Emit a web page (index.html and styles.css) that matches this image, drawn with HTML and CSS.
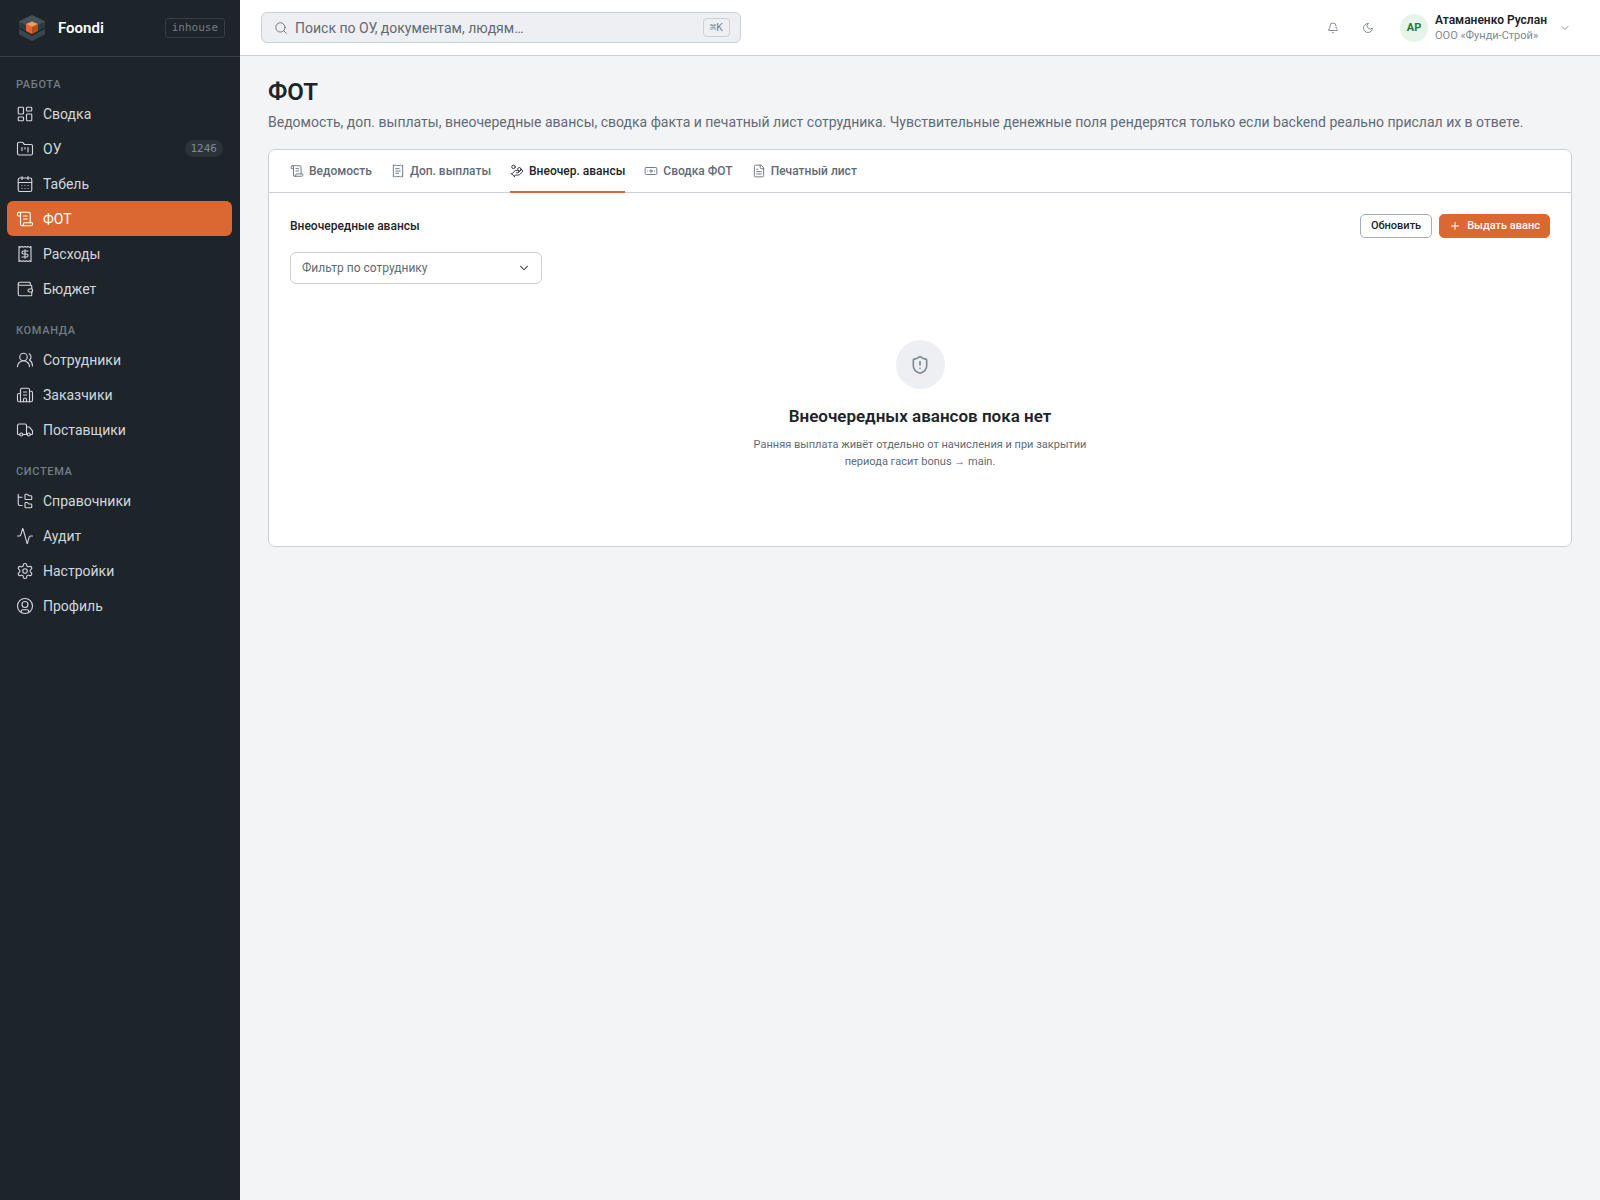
FILE: index.html
```html
<!DOCTYPE html>
<html lang="ru">
<head>
<meta charset="utf-8">
<meta name="viewport" content="width=device-width, initial-scale=1">
<title>ФОТ — Foondi</title>
<link rel="stylesheet" href="styles.css">
</head>
<body>
<div class="app">
  <aside class="sidebar">
    <div class="brand">
      <svg class="brand-logo" viewBox="0 0 36 36" aria-hidden="true">
        <path d="M18 5 31 11.5V23.500L18 31 5 23.500V11.500z" fill="#2f3b43"/>
        <path d="M18 5 31 11.500 18 18 5 11.500z" fill="#44515a"/>
        <path d="M5 18.500 18 25.500 31 18.500V24.500L18 31 5 24.500z" fill="#3a464e"/>
        <path d="M5 18 18 25 31 18" fill="none" stroke="#1d242a" stroke-width="1.200"/>
        <path d="M12 14 18 17V24L12 21z" fill="#e2662d"/>
        <path d="M24 14 18 17V24L24 21z" fill="#b84a1e"/>
        <path d="M18 11.500 24 14 18 17 12 14z" fill="#f79a5c"/>
      </svg>
      <span class="brand-name">Foondi</span>
      <span class="brand-tag">inhouse</span>
    </div>
    <nav class="nav">
      <section class="nav-group">
        <h2 class="nav-label">Работа</h2>
        <a class="nav-item" href="#"><svg class="icon" viewBox="0 0 24 24"><rect x="3" y="3" width="7" height="9" rx="1"/><rect x="14" y="3" width="7" height="5" rx="1"/><rect x="14" y="12" width="7" height="9" rx="1"/><rect x="3" y="16" width="7" height="5" rx="1"/></svg>Сводка</a>
        <a class="nav-item" href="#"><svg class="icon" viewBox="0 0 24 24"><path d="M4 20h16a2 2 0 0 0 2-2V8a2 2 0 0 0-2-2h-7.930a2 2 0 0 1-1.660-.9l-.82-1.200A2 2 0 0 0 7.930 3H4a2 2 0 0 0-2 2v13c0 1.100.9 2 2 2Z"/><path d="M8 10v4M12 10v2M16 10v6"/></svg>ОУ<span class="nav-count">1246</span></a>
        <a class="nav-item" href="#"><svg class="icon" viewBox="0 0 24 24"><path d="M8 2v4M16 2v4M3 10h18"/><rect x="3" y="4" width="18" height="18" rx="2"/><path d="M8 14h.01M12 14h.01M16 14h.01M8 18h.01M12 18h.01M16 18h.01"/></svg>Табель</a>
        <a class="nav-item is-active" href="#" aria-current="page"><svg class="icon" viewBox="0 0 24 24"><path d="M15 12h-5M15 8h-5M19 17V5a2 2 0 0 0-2-2H4"/><path d="M8 21h12a2 2 0 0 0 2-2v-1a1 1 0 0 0-1-1H11a1 1 0 0 0-1 1v1a2 2 0 1 1-4 0V5a2 2 0 1 0-4 0v2a1 1 0 0 0 1 1h3"/></svg>ФОТ</a>
        <a class="nav-item" href="#"><svg class="icon" viewBox="0 0 24 24"><path d="M4 2v20l2-1 2 1 2-1 2 1 2-1 2 1 2-1 2 1V2l-2 1-2-1-2 1-2-1-2 1-2-1-2 1Z"/><path d="M16 8h-6a2 2 0 1 0 0 4h4a2 2 0 1 1 0 4H8M12 17.500v-11"/></svg>Расходы</a>
        <a class="nav-item" href="#"><svg class="icon" viewBox="0 0 24 24"><path d="M19 7V4a1 1 0 0 0-1-1H5a2 2 0 0 0 0 4h15a1 1 0 0 1 1 1v4h-3a2 2 0 0 0 0 4h3a1 1 0 0 0 1-1v-2a1 1 0 0 0-1-1"/><path d="M3 5v14a2 2 0 0 0 2 2h15a1 1 0 0 0 1-1v-4"/></svg>Бюджет</a>
      </section>
      <section class="nav-group">
        <h2 class="nav-label">Команда</h2>
        <a class="nav-item" href="#"><svg class="icon" viewBox="0 0 24 24"><path d="M18 21a8 8 0 0 0-16 0"/><circle cx="10" cy="8" r="5"/><path d="M22 20c0-3.370-2-6.500-4-8a5 5 0 0 0-.45-8.300"/></svg>Сотрудники</a>
        <a class="nav-item" href="#"><svg class="icon" viewBox="0 0 24 24"><path d="M10 12h4M10 8h4M14 21v-3a2 2 0 0 0-4 0v3"/><path d="M6 10H4a2 2 0 0 0-2 2v7a2 2 0 0 0 2 2h16a2 2 0 0 0 2-2V9a2 2 0 0 0-2-2h-2"/><path d="M6 21V5a2 2 0 0 1 2-2h8a2 2 0 0 1 2 2v16"/></svg>Заказчики</a>
        <a class="nav-item" href="#"><svg class="icon" viewBox="0 0 24 24"><path d="M14 18V6a2 2 0 0 0-2-2H4a2 2 0 0 0-2 2v11a1 1 0 0 0 1 1h2M15 18H9M19 18h2a1 1 0 0 0 1-1v-3.650a1 1 0 0 0-.22-.624l-3.480-4.350A1 1 0 0 0 17.520 8H14"/><circle cx="17" cy="18" r="2"/><circle cx="7" cy="18" r="2"/></svg>Поставщики</a>
      </section>
      <section class="nav-group">
        <h2 class="nav-label">Система</h2>
        <a class="nav-item" href="#"><svg class="icon" viewBox="0 0 24 24"><path d="M20 10a1 1 0 0 0 1-1V6a1 1 0 0 0-1-1h-2.500a1 1 0 0 1-.8-.4l-.9-1.200A1 1 0 0 0 15 3h-2a1 1 0 0 0-1 1v5a1 1 0 0 0 1 1ZM20 21a1 1 0 0 0 1-1v-3a1 1 0 0 0-1-1h-2.900a1 1 0 0 1-.88-.55l-.42-.85a1 1 0 0 0-.92-.6H13a1 1 0 0 0-1 1v5a1 1 0 0 0 1 1ZM3 5a2 2 0 0 0 2 2h3M3 3v13a2 2 0 0 0 2 2h3"/></svg>Справочники</a>
        <a class="nav-item" href="#"><svg class="icon" viewBox="0 0 24 24"><path d="M22 12h-2.480a2 2 0 0 0-1.930 1.460l-2.350 8.360a.25.25 0 0 1-.48 0L9.240 2.180a.25.25 0 0 0-.48 0l-2.350 8.360A2 2 0 0 1 4.490 12H2"/></svg>Аудит</a>
        <a class="nav-item" href="#"><svg class="icon" viewBox="0 0 24 24"><path d="M12.220 2h-.44a2 2 0 0 0-2 2v.18a2 2 0 0 1-1 1.730l-.43.25a2 2 0 0 1-2 0l-.15-.08a2 2 0 0 0-2.730.73l-.22.38a2 2 0 0 0 .73 2.730l.15.1a2 2 0 0 1 1 1.720v.51a2 2 0 0 1-1 1.740l-.15.09a2 2 0 0 0-.73 2.730l.22.38a2 2 0 0 0 2.730.73l.15-.08a2 2 0 0 1 2 0l.43.25a2 2 0 0 1 1 1.730V20a2 2 0 0 0 2 2h.44a2 2 0 0 0 2-2v-.18a2 2 0 0 1 1-1.730l.43-.25a2 2 0 0 1 2 0l.15.08a2 2 0 0 0 2.730-.73l.22-.39a2 2 0 0 0-.73-2.730l-.15-.08a2 2 0 0 1-1-1.740v-.5a2 2 0 0 1 1-1.740l.15-.09a2 2 0 0 0 .73-2.730l-.22-.38a2 2 0 0 0-2.730-.73l-.15.08a2 2 0 0 1-2 0l-.43-.25a2 2 0 0 1-1-1.730V4a2 2 0 0 0-2-2z"/><circle cx="12" cy="12" r="3"/></svg>Настройки</a>
        <a class="nav-item" href="#"><svg class="icon" viewBox="0 0 24 24"><circle cx="12" cy="12" r="10"/><circle cx="12" cy="10" r="4"/><path d="M7 20.660V19a2 2 0 0 1 2-2h6a2 2 0 0 1 2 2v1.660"/></svg>Профиль</a>
      </section>
    </nav>
  </aside>
  <div class="main">
    <header class="topbar">
      <label class="search">
        <svg class="icon icon-search" viewBox="0 0 24 24"><circle cx="11" cy="11" r="8"/><path d="m21 21-4.300-4.300"/></svg>
        <input class="search-input" type="search" placeholder="Поиск по ОУ, документам, людям…" aria-label="Поиск">
        <kbd class="search-key">⌘K</kbd>
      </label>
      <div class="topbar-actions">
        <button class="icon-button" type="button" aria-label="Уведомления"><svg class="icon" viewBox="0 0 24 24"><path d="M10.270 21a2 2 0 0 0 3.460 0M3.260 15.330A1 1 0 0 0 4 17h16a1 1 0 0 0 .74-1.670C19.410 13.960 18 12.500 18 8A6 6 0 0 0 6 8c0 4.500-1.410 5.960-2.740 7.330"/></svg></button>
        <button class="icon-button" type="button" aria-label="Тема"><svg class="icon" viewBox="0 0 24 24"><path d="M12 3a6 6 0 0 0 9 9 9 9 0 1 1-9-9Z"/></svg></button>
        <button class="user" type="button">
          <span class="avatar">АР</span>
          <span class="user-text"><span class="user-name">Атаманенко Руслан</span><span class="user-org">ООО «Фунди-Строй»</span></span>
          <svg class="icon icon-chevron" viewBox="0 0 24 24"><path d="m6 9 6 6 6-6"/></svg>
        </button>
      </div>
    </header>
    <main class="page">
      <h1 class="page-title">ФОТ</h1>
      <p class="page-lead">Ведомость, доп. выплаты, внеочередные авансы, сводка факта и печатный лист сотрудника. Чувствительные денежные поля рендерятся только если backend реально прислал их в ответе.</p>
      <section class="card">
        <div class="tabs" role="tablist">
          <button class="tab" type="button" role="tab"><svg class="icon" viewBox="0 0 24 24"><path d="M15 12h-5M15 8h-5M19 17V5a2 2 0 0 0-2-2H4"/><path d="M8 21h12a2 2 0 0 0 2-2v-1a1 1 0 0 0-1-1H11a1 1 0 0 0-1 1v1a2 2 0 1 1-4 0V5a2 2 0 1 0-4 0v2a1 1 0 0 0 1 1h3"/></svg>Ведомость</button>
          <button class="tab" type="button" role="tab"><svg class="icon" viewBox="0 0 24 24"><path d="M4 2v20l2-1 2 1 2-1 2 1 2-1 2 1 2-1 2 1V2l-2 1-2-1-2 1-2-1-2 1-2-1-2 1ZM14 8H8M16 12H8M13 16H8"/></svg>Доп. выплаты</button>
          <button class="tab is-active" type="button" role="tab" aria-selected="true"><svg class="icon" viewBox="0 0 24 24"><path d="M11 15h2a2 2 0 1 0 0-4h-3c-.6 0-1.100.2-1.400.6L3 17"/><path d="m7 21 1.600-1.400c.3-.4.8-.6 1.400-.6h4c1.100 0 2.100-.4 2.800-1.200l4.600-4.400a2 2 0 0 0-2.750-2.910l-4.200 3.900M2 16l6 6"/><circle cx="16" cy="9" r="2.900"/><circle cx="6" cy="5" r="3"/></svg>Внеочер. авансы</button>
          <button class="tab" type="button" role="tab"><svg class="icon" viewBox="0 0 24 24"><rect x="2" y="6" width="20" height="12" rx="2"/><circle cx="12" cy="12" r="2"/><path d="M6 12h.01M18 12h.01"/></svg>Сводка ФОТ</button>
          <button class="tab" type="button" role="tab"><svg class="icon" viewBox="0 0 24 24"><path d="M15 2H6a2 2 0 0 0-2 2v16a2 2 0 0 0 2 2h12a2 2 0 0 0 2-2V7Z"/><path d="M14 2v4a2 2 0 0 0 2 2h4M10 9H8M16 13H8M16 17H8"/></svg>Печатный лист</button>
        </div>
        <div class="panel">
          <div class="panel-head">
            <h2 class="panel-title">Внеочередные авансы</h2>
            <button class="button" type="button">Обновить</button>
            <button class="button button-primary" type="button"><svg class="icon" viewBox="0 0 24 24"><path d="M5 12h14M12 5v14"/></svg>Выдать аванс</button>
          </div>
          <div class="filter">
            <select class="filter-select" aria-label="Фильтр по сотруднику"><option>Фильтр по сотруднику</option></select>
            <svg class="icon filter-arrow" viewBox="0 0 24 24"><path d="m6 9 6 6 6-6"/></svg>
          </div>
          <div class="empty">
            <span class="empty-mark"><svg class="icon" viewBox="0 0 24 24"><path d="M20 13c0 5-3.500 7.500-7.660 8.950a1 1 0 0 1-.67-.01C7.500 20.500 4 18 4 13V6a1 1 0 0 1 1-1c2 0 4.500-1.200 6.240-2.720a1.170 1.170 0 0 1 1.520 0C14.510 3.810 17 5 19 5a1 1 0 0 1 1 1zM12 8v4M12 16h.01"/></svg></span>
            <h3 class="empty-title">Внеочередных авансов пока нет</h3>
            <p class="empty-text">Ранняя выплата живёт отдельно от начисления и при закрытии периода гасит bonus → main.</p>
          </div>
        </div>
      </section>
    </main>
  </div>
</div>
</body>
</html>
```
FILE: styles.css
```css
*, *::before, *::after { box-sizing: border-box; }

:root {
  --ink: #1d242a;
  --muted: #5f6b76;
  --faint: #7d8994;
  --line: #cbd0d8;
  --soft: #eeeff3;
  --accent: #db6832;
  --mono: "DejaVu Sans Mono", monospace;
}

body {
  margin: 0;
  background: #f3f4f6;
  color: var(--ink);
  font-family: Roboto, "Noto Sans", sans-serif;
  font-size: 14px;
  line-height: 20px;
}

h1, h2, h3, p { margin: 0; }
button, input, select { font: inherit; color: inherit; }
button { cursor: pointer; }

.icon {
  flex: none;
  width: 14px;
  height: 14px;
  fill: none;
  stroke: currentColor;
  stroke-width: 1.5;
  stroke-linecap: round;
  stroke-linejoin: round;
}

.app { display: flex; min-height: 100vh; }

/* Sidebar */
.sidebar { flex: none; width: 240px; background: var(--ink); color: #d3d7dd; }

.brand {
  display: flex;
  align-items: center;
  gap: 8px;
  height: 57px;
  padding: 0 15px 0 14px;
  border-bottom: 1px solid #363d45;
}
.brand-logo { width: 36px; height: 36px; }
.brand-name { color: #fff; font-size: 15px; font-weight: 600; }
.brand-tag {
  margin-left: auto;
  padding: 0 6px;
  border: 1px solid #363d45;
  border-radius: 3px;
  color: #727d87;
  font: 11px/18px var(--mono);
}

.nav { display: flex; flex-direction: column; gap: 17px; padding: 20px 8px 20px 7px; }
.nav-label {
  padding: 0 9px 3px;
  color: #727d87;
  font-size: 11px;
  font-weight: 500;
  line-height: 16px;
  letter-spacing: 0.06em;
  text-transform: uppercase;
}
.nav-item {
  display: flex;
  align-items: center;
  gap: 9px;
  height: 35px;
  padding: 0 9px;
  border-radius: 6px;
  color: inherit;
  text-decoration: none;
}
.nav-item .icon { width: 18px; height: 18px; }
.nav-item.is-active { background: var(--accent); color: #fff; }
.nav-count {
  margin-left: auto;
  padding: 0 6px;
  border-radius: 9px;
  background: #2c333b;
  color: #7d8994;
  font: 11px/17px var(--mono);
}

/* Top bar */
.main { flex: 1; min-width: 0; }
.topbar {
  display: flex;
  align-items: center;
  justify-content: space-between;
  height: 56px;
  padding: 0 29px 0 21px;
  border-bottom: 1px solid var(--line);
  background: #fff;
}
.search {
  display: flex;
  flex: 0 1 480px;
  align-items: center;
  gap: 7px;
  height: 31px;
  padding: 0 10px 0 12px;
  border: 1px solid var(--line);
  border-radius: 6px;
  background: var(--soft);
  color: var(--muted);
}
.search-input { flex: 1; min-width: 0; padding: 0; border: 0; background: none; outline: 0; }
.search-input::placeholder { color: var(--muted); opacity: 1; }
.search-key {
  padding: 0 6px;
  border: 1px solid var(--line);
  border-radius: 4px;
  color: var(--faint);
  font: 11px/17px var(--mono);
}

.topbar-actions { display: flex; align-items: center; gap: 7px; }
.icon-button {
  display: grid;
  place-items: center;
  width: 28px;
  height: 28px;
  padding: 0;
  border: 0;
  background: none;
  color: var(--muted);
}
.icon-button .icon { width: 12px; height: 12px; }
.user {
  display: flex;
  align-items: center;
  gap: 7px;
  margin-left: 11px;
  padding: 0;
  border: 0;
  background: none;
  text-align: left;
}
.avatar {
  width: 28px;
  height: 28px;
  border-radius: 50%;
  background: #e6f4ea;
  color: #1f7a3d;
  font-size: 11px;
  font-weight: 700;
  line-height: 28px;
  text-align: center;
}
.user-text { display: flex; flex-direction: column; min-width: 117px; }
.user-name { font-size: 12px; font-weight: 600; line-height: 16px; }
.user-org { color: var(--faint); font-size: 11px; line-height: 15px; }
.icon-chevron { width: 12px; height: 12px; color: var(--muted); }

/* Page */
.page { padding: 20px 28px; }
.page-title { font-size: 24px; font-weight: 600; line-height: 32px; }
.page-lead { padding: 4px 0 17px; color: var(--muted); }
.card { border: 1px solid var(--line); border-radius: 7px; background: #fff; }

.tabs { display: flex; gap: 19px; padding: 0 21px; border-bottom: 1px solid var(--line); }
.tab {
  display: flex;
  align-items: center;
  gap: 5px;
  height: 43px;
  margin-bottom: -1px;
  padding: 0;
  border: 0;
  border-bottom: 2px solid transparent;
  background: none;
  color: var(--muted);
  font-size: 12px;
  font-weight: 500;
}
.tab.is-active { border-color: var(--accent); color: var(--ink); }

.panel { padding: 21px; }
.panel-head { display: flex; align-items: center; gap: 7px; }
.panel-title { margin-right: auto; font-size: 12px; font-weight: 500; }
.button {
  display: flex;
  align-items: center;
  gap: 6px;
  height: 24px;
  padding: 0 10px;
  border: 1px solid #a4adb8;
  border-radius: 5px;
  background: #fff;
  font-size: 11px;
  font-weight: 500;
}
.button-primary { padding: 0 9px; border-color: var(--accent); background: var(--accent); color: #fff; }
.button .icon { width: 12px; height: 12px; stroke-width: 2; }

.filter { display: grid; align-items: center; width: 252px; margin-top: 14px; }
.filter > * { grid-area: 1 / 1; }
.filter-select {
  appearance: none;
  height: 32px;
  padding: 0 32px 0 11px;
  border: 1px solid var(--line);
  border-radius: 6px;
  background: #fff;
  color: var(--muted);
  font-size: 12px;
}
.filter-arrow { justify-self: end; margin-right: 11px; color: var(--muted); stroke-width: 2; pointer-events: none; }

.empty { display: flex; flex-direction: column; align-items: center; padding: 56px 0 55px; text-align: center; }
.empty-mark {
  display: grid;
  place-items: center;
  width: 49px;
  height: 49px;
  border-radius: 50%;
  background: var(--soft);
  color: var(--faint);
}
.empty-mark .icon { width: 20px; height: 20px; stroke-width: 2; }
.empty-title { margin-top: 14px; font-size: 17px; font-weight: 600; line-height: 26px; }
.empty-text { max-width: 350px; margin-top: 7px; color: var(--muted); font-size: 11px; line-height: 17px; }
```
